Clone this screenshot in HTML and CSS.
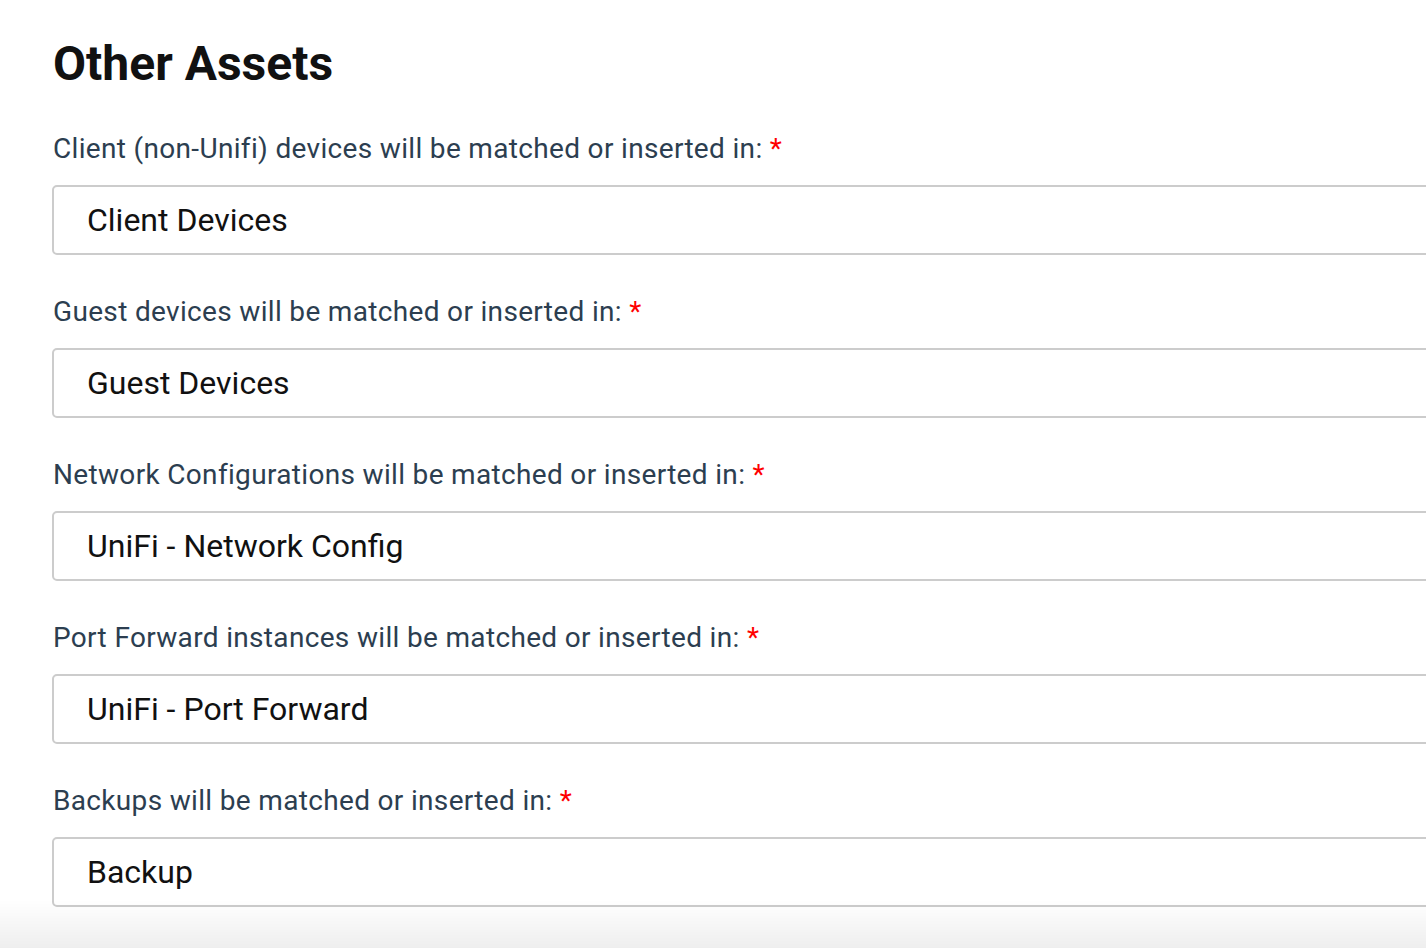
FILE: index.html
```html
<!DOCTYPE html>
<html lang="en">
<head>
    <meta charset="UTF-8">
    <title>Other Assets</title>
    <link rel="stylesheet" href="styles.css">
</head>
<body>
    <section class="assets">
        <h2>Other Assets</h2>
        <div class="field">
            <label>Client (non-Unifi) devices will be matched or inserted in: <span class="req">*</span></label>
            <div class="select">Client Devices</div>
        </div>
        <div class="field">
            <label>Guest devices will be matched or inserted in: <span class="req">*</span></label>
            <div class="select">Guest Devices</div>
        </div>
        <div class="field">
            <label>Network Configurations will be matched or inserted in: <span class="req">*</span></label>
            <div class="select">UniFi - Network Config</div>
        </div>
        <div class="field">
            <label>Port Forward instances will be matched or inserted in: <span class="req">*</span></label>
            <div class="select">UniFi - Port Forward</div>
        </div>
        <div class="field">
            <label>Backups will be matched or inserted in: <span class="req">*</span></label>
            <div class="select">Backup</div>
        </div>
    </section>
    <div class="fade"></div>
</body>
</html>
```

FILE: styles.css
```css
body {
    font-family: Roboto, "Liberation Sans", sans-serif;
    margin: 0;
    padding: 0;
    background: #fff;
    overflow: hidden;
    height: 948px;
}
.assets {
    padding: 36px 0 0 52px;
    width: 1500px;
}
h2 {
    font-size: 48px;
    font-weight: bold;
    color: #111;
    margin: 0 0 39px 1px;
    line-height: 56px;
}
.field {
    margin-bottom: 39px;
}
.field label {
    display: block;
    font-size: 28px;
    letter-spacing: 0.33px;
    color: #2c3e50;
    line-height: 36px;
    margin: 0 0 18px 1px;
}
.req {
    color: #f00;
}
.select {
    height: 66px;
    border: 2px solid #ccc;
    border-radius: 5px;
    box-sizing: content-box;
    padding: 0 33px;
    font-size: 32px;
    line-height: 66px;
    color: #111;
}
.fade {
    position: fixed;
    left: 0;
    right: 0;
    bottom: 0;
    height: 48px;
    background: linear-gradient(rgba(0, 0, 0, 0), rgba(0, 0, 0, 0.065));
    pointer-events: none;
}
```
